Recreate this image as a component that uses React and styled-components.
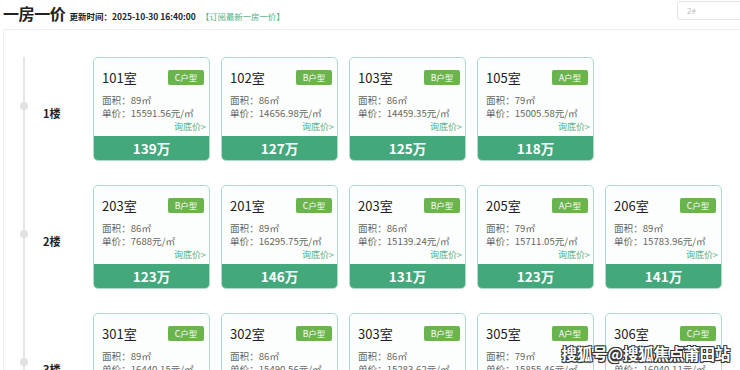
import React from "react";
import styled, { createGlobalStyle } from "styled-components";

const Global = createGlobalStyle`
  html, body { margin: 0; padding: 0; background: #fff; overflow: hidden; }
  body { font-family: "Noto Sans CJK SC", "Noto Sans", sans-serif; color: #333; }
  * { box-sizing: border-box; }
`;

const Page = styled.div`
  position: relative;
  width: 740px;
  height: 370px;
  padding-left: 3px;
`;

const Header = styled.div`
  display: flex;
  align-items: flex-end;
  height: 29px;
  padding-bottom: 6px;
`;

const Title = styled.h1`
  margin: 0 0 -1px 0;
  font-size: 16px;
  line-height: 22px;
  font-weight: 700;
  color: #222;
  letter-spacing: -0.4px;
`;

const Updated = styled.span`
  margin-left: 4px;
  font-size: 8.5px;
  font-weight: 700;
  color: #222;
  line-height: 14px;
`;

const Subscribe = styled.a`
  margin-left: 5px;
  font-size: 8.4px;
  color: #4fb07f;
  line-height: 14px;
  text-decoration: none;
`;

const SelectBox = styled.div`
  margin-left: auto;
  align-self: flex-start;
  margin-top: 1px;
  width: 70px;
  height: 19px;
  border: 1px solid #e4e4e4;
  border-radius: 3px;
  font-size: 8px;
  color: #bbb;
  padding-left: 9px;
  line-height: 17px;
  margin-right: -7px;
`;

const Panel = styled.div`
  border-top: 1px solid #eee;
  border-left: 1px solid #eee;
  padding-top: 27px;
  padding-left: 19px;
`;

const FloorList = styled.div`
  border-left: 2px solid #e6e6e6;
  display: flex;
  flex-direction: column;
  gap: 24px;
`;

const FloorRow = styled.div`
  position: relative;
  display: flex;
  align-items: center;
  &::before {
    content: "";
    position: absolute;
    left: -5px;
    top: 45px;
    width: 8px;
    height: 8px;
    border-radius: 50%;
    background: #e2e2e2;
  }
`;

const FloorLabel = styled.div`
  width: 68px;
  padding-left: 18px;
  padding-top: 8px;
  font-size: 11px;
  font-weight: 700;
  color: #222;
`;

const Cards = styled.div`
  display: flex;
  gap: 11px;
`;

const Card = styled.div`
  width: 117px;
  height: 104px;
  border: 1px solid #aadcc6;
  border-radius: 5px;
  background: #fbfefd;
  overflow: hidden;
  display: flex;
  flex-direction: column;
`;

const CardBody = styled.div`
  flex: 1;
  padding: 10px 5px 0 8px;
`;

const TopLine = styled.div`
  display: flex;
  justify-content: space-between;
  align-items: center;
  height: 20px;
`;

const Room = styled.div`
  font-size: 13px;
  line-height: 20px;
  color: #222;
`;

const Badge = styled.div`
  width: 36px;
  height: 15px;
  border-radius: 2px;
  background: #6ab44e;
  color: #fff;
  font-size: 8.5px;
  line-height: 15px;
  text-align: center;
  margin-top: -1px;
`;

const InfoBlock = styled.div`
  margin-top: 6px;
`;

const Info = styled.div`
  font-size: 9.6px;
  color: #666;
  line-height: 13px;
  white-space: nowrap;
`;

const Ask = styled.div`
  text-align: right;
  font-size: 9px;
  line-height: 13px;
  color: #4fb07f;
  margin-right: -2px;
`;

const PriceBar = styled.div`
  height: 24px;
  background: #43a87b;
  color: #fff;
  font-size: 13.5px;
  font-weight: 700;
  text-align: center;
  line-height: 24px;
`;

const Watermark = styled.div`
  position: absolute;
  right: 10px;
  bottom: 6px;
  font-size: 15.5px;
  font-weight: 700;
  color: #fff;
  letter-spacing: -0.2px;
  text-shadow: -1px -1px 0 #333, 1px -1px 0 #333, -1px 1px 0 #333, 1px 1px 0 #333, 0 1px 1px #222;
`;

const floors = [
  {
    label: "1楼",
    rooms: [
      ["101室", "C户型", "89", "15591.56", "139万"],
      ["102室", "B户型", "86", "14656.98", "127万"],
      ["103室", "B户型", "86", "14459.35", "125万"],
      ["105室", "A户型", "79", "15005.58", "118万"],
    ],
  },
  {
    label: "2楼",
    rooms: [
      ["203室", "B户型", "86", "7688", "123万"],
      ["201室", "C户型", "89", "16295.75", "146万"],
      ["203室", "B户型", "86", "15139.24", "131万"],
      ["205室", "A户型", "79", "15711.05", "123万"],
      ["206室", "C户型", "89", "15783.96", "141万"],
    ],
  },
  {
    label: "3楼",
    rooms: [
      ["301室", "C户型", "89", "16440.15", "146万"],
      ["302室", "B户型", "86", "15490.56", "133万"],
      ["303室", "B户型", "86", "15283.62", "131万"],
      ["305室", "A户型", "79", "15855.46", "125万"],
      ["306室", "C户型", "89", "16040.11", "143万"],
    ],
  },
];

export default function App() {
  return (
    <Page>
      <Global />
      <Header>
        <Title>一房一价</Title>
        <Updated>更新时间：2025-10-30 16:40:00</Updated>
        <Subscribe>【订阅最新一房一价】</Subscribe>
        <SelectBox>2#</SelectBox>
      </Header>
      <Panel>
        <FloorList>
          {floors.map((f) => (
            <FloorRow key={f.label}>
              <FloorLabel>{f.label}</FloorLabel>
              <Cards>
                {f.rooms.map((r, i) => (
                  <Card key={i}>
                    <CardBody>
                      <TopLine>
                        <Room>{r[0]}</Room>
                        <Badge>{r[1]}</Badge>
                      </TopLine>
                      <InfoBlock>
                        <Info>面积：{r[2]}㎡</Info>
                        <Info>单价：{r[3]}元/㎡</Info>
                        <Ask>询底价&gt;</Ask>
                      </InfoBlock>
                    </CardBody>
                    <PriceBar>{r[4]}</PriceBar>
                  </Card>
                ))}
              </Cards>
            </FloorRow>
          ))}
        </FloorList>
      </Panel>
      <Watermark>搜狐号@搜狐焦点莆田站</Watermark>
    </Page>
  );
}
